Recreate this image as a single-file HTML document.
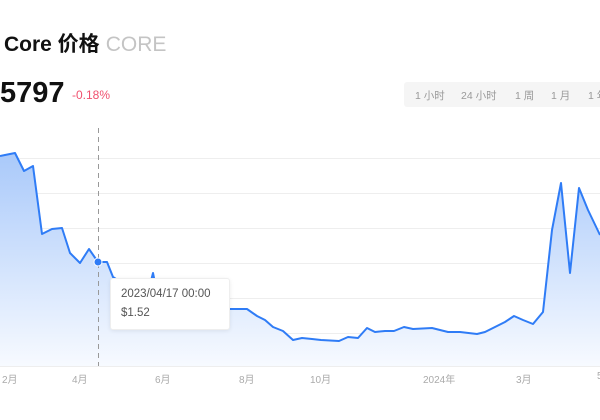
<!DOCTYPE html><html><head><meta charset="utf-8"><style>
body{margin:0;width:600px;height:420px;background:#fff;overflow:hidden;position:relative;font-family:"Liberation Sans","Noto Sans CJK SC",sans-serif}
.t{position:absolute;left:4px;top:28px;font-size:21px;font-weight:bold;color:#111;white-space:nowrap}
.t span{font-weight:normal;color:#c4c4c4;margin-left:6px}
.p{position:absolute;left:0;top:77px;font-size:29px;font-weight:bold;color:#111}
.c{position:absolute;left:72px;top:88px;font-size:12px;color:#f0506e}
.b{position:absolute;left:404px;top:82px;width:200px;height:25px;background:#f5f5f5;border-radius:3px;font-size:10.5px;color:#999}
.b span{position:absolute;top:6px;white-space:nowrap}
.l{position:absolute;top:371px;font-size:10px;color:#aaa;white-space:nowrap}
.tip{position:absolute;left:110px;top:278px;width:120px;height:52px;background:#fff;border:1px solid #eee;border-radius:3px;box-shadow:0 1px 4px rgba(0,0,0,.08);font-size:11.5px;color:#555;box-sizing:border-box}
.tip div{position:absolute;left:10px;white-space:nowrap}
</style></head><body>
<div class="t">Core 价格<span>CORE</span></div>
<div class="p">5797</div><div class="c">-0.18%</div>
<div class="b"><span style="left:11px">1 小时</span><span style="left:57px">24 小时</span><span style="left:111px">1 周</span><span style="left:147px">1 月</span><span style="left:184px">1 年</span></div>
<svg width="600" height="420" style="position:absolute;left:0;top:0">
<defs><linearGradient id="g" x1="0" y1="0" x2="0" y2="1"><stop offset="0" stop-color="#a9c9fa"/><stop offset="1" stop-color="#f7faff"/></linearGradient></defs>
<g stroke="#eee" stroke-width="1"><line x1="0" x2="600" y1="158.5" y2="158.5"/><line x1="0" x2="600" y1="193.5" y2="193.5"/><line x1="0" x2="600" y1="228.5" y2="228.5"/><line x1="0" x2="600" y1="263.5" y2="263.5"/><line x1="0" x2="600" y1="298.5" y2="298.5"/><line x1="0" x2="600" y1="333.5" y2="333.5"/><line x1="0" x2="600" y1="366.5" y2="366.5"/></g>
<path d="M0,156 L5,155 15,153 24,171 33,166 42,234 52,229 62,228 70,253 80,263 89,249 98,262 107,262 113,277 125,285 140,283 150,285 153,273 156,288 170,295 190,300 210,306 230,309 247,309 257,316 265,320 273,327 283,331 293,340 302,338 312,339 321,340 339,341 348,337 358,338 367,328 375,332 385,331 394,331 404,327 413,329 432,328 448,332 460,332 477,334 485,332 497,326 505,322 514,316 523,320 533,324 543,312 552,230 561,183 570,273 579,188 588,210 600,235 L600,366 0,366Z" fill="url(#g)"/>
<polyline fill="none" stroke="#2f7cf6" stroke-width="2" stroke-linejoin="round" points="0,156 5,155 15,153 24,171 33,166 42,234 52,229 62,228 70,253 80,263 89,249 98,262 107,262 113,277 125,285 140,283 150,285 153,273 156,288 170,295 190,300 210,306 230,309 247,309 257,316 265,320 273,327 283,331 293,340 302,338 312,339 321,340 339,341 348,337 358,338 367,328 375,332 385,331 394,331 404,327 413,329 432,328 448,332 460,332 477,334 485,332 497,326 505,322 514,316 523,320 533,324 543,312 552,230 561,183 570,273 579,188 588,210 600,235"/>
<line x1="98.5" x2="98.5" y1="128" y2="366" stroke="#999" stroke-dasharray="5,4"/>
<circle cx="98" cy="262" r="4" fill="#2f7cf6" stroke="#fff" stroke-width="1"/>
</svg>
<div class="tip"><div style="top:9px">2023/04/17 00:00</div><div style="top:28px">$1.52</div></div>
<div class="l" style="left:2px">2月</div><div class="l" style="left:72px">4月</div><div class="l" style="left:155px">6月</div><div class="l" style="left:239px">8月</div><div class="l" style="left:310px">10月</div><div class="l" style="left:423px">2024年</div><div class="l" style="left:516px">3月</div><div class="l" style="left:597px">5</div>
</body></html>
